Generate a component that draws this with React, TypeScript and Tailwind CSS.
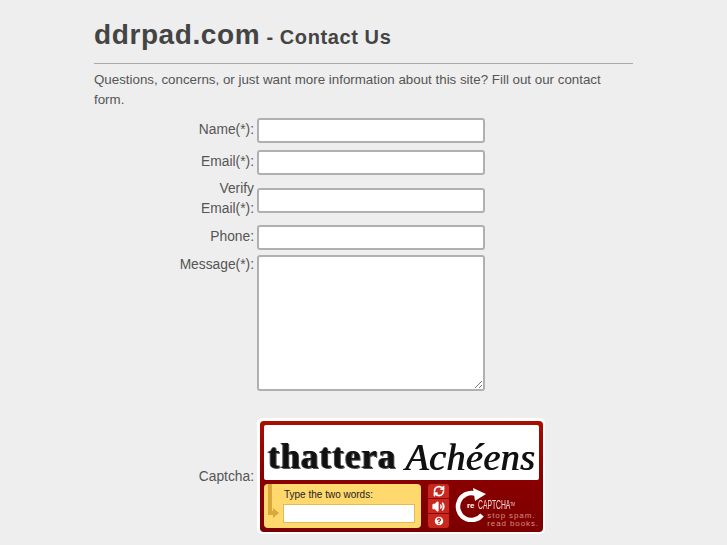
import { HelpCircle, RefreshCw, Volume2 } from "lucide-react";

const fieldClass = "block w-[228px] h-[25px] -ml-[1px] rounded-[3px] border-2 border-[#b0b0b0] bg-white";

function Row({ label, children, className }: { label: React.ReactNode; children: React.ReactNode; className?: string }) {
  return (
    <div className={`flex items-center ${className ?? ""}`}>
      <div className="w-[160px] pb-[2px] text-right">{label}</div>
      <div className="ml-[4px]">{children}</div>
    </div>
  );
}

function RecaptchaLogo() {
  return (
    <svg width="34" height="34" viewBox="0 0 34 34" className="shrink-0">
      <path d="M20 5.5 A13.5 13.5 0 1 0 27 27" fill="none" stroke="#ffffff" strokeWidth="4.5" />
      <path d="M18 0 L31 6 L20 13 Z" fill="#ffffff" />
    </svg>
  );
}

function Captcha() {
  return (
    <div className="w-[288px] h-[116px] rounded-[5px] bg-white p-[3px]">
      <div className="flex h-[111px] w-[283px] flex-col gap-[4px] rounded-[4px] bg-gradient-to-b from-[#a80f00] via-[#8a0000] to-[#7c0000] p-[4px]">
        <div className="flex h-[55px] w-[275px] items-center overflow-hidden rounded-[2px] bg-white pl-[4px] pt-[8px] text-[#111111] blur-[0.6px]">
          <span className="w-[137px] font-['Liberation_Serif',serif] text-[35px] leading-none font-bold tracking-[1px] [text-shadow:1px_1px_0_#555,-1px_0_0_#555]">thattera</span>
          <span className="font-['Liberation_Serif',serif] text-[38px] leading-none italic tracking-[0.5px] [text-shadow:1px_0_0_#111]">Achéens</span>
        </div>
        <div className="flex">
          <div className="relative h-[44px] w-[157px] rounded-[4px] bg-[#ffd96e]">
            <div className="absolute left-[4px] top-0 h-[31px] w-[4px] bg-[#d9a93b]" />
            <div className="absolute left-[4px] top-[27px] h-[4px] w-[8px] bg-[#d9a93b]" />
            <div className="absolute left-[9px] top-[24px] h-0 w-0 border-y-[5px] border-l-[6px] border-y-transparent border-l-[#d9a93b]" />
            <div className="pl-[20px] pt-[4px] font-['Liberation_Sans',sans-serif] text-[10px] leading-[13px] text-[#222222]">Type the two words:</div>
            <div className="ml-[19px] mt-[3px] h-[19px] w-[132px] border border-[#e3bb55] bg-white" />
          </div>
          <div className="ml-[7px] flex h-[44px] w-[21px] flex-col divide-y divide-[#8a0000] rounded-[3px] bg-[#c8281e] text-white">
            <div className="flex flex-1 items-center justify-center"><RefreshCw size={12} strokeWidth={3.5} /></div>
            <div className="flex flex-1 items-center justify-center"><Volume2 size={13} strokeWidth={2.5} fill="#ffffff" /></div>
            <div className="flex flex-1 items-center justify-center"><HelpCircle size={12} strokeWidth={3} fill="#ffffff" stroke="#c8281e" /></div>
          </div>
          <div className="relative ml-[6px] flex w-[84px] pt-[4px]">
            <RecaptchaLogo />
            <span className="absolute left-[12px] top-[17px] font-['Liberation_Sans',sans-serif] text-[8px] leading-[9px] font-bold text-white">re</span>
            <div className="absolute left-[23px] top-[15px] origin-left scale-x-[0.52] font-['Liberation_Sans',sans-serif] text-[13px] leading-[11px] whitespace-nowrap text-[#f6dcd8]">
              CAPTCHA<span className="align-top text-[6px]">TM</span>
            </div>
            <div className="absolute right-0 top-[28px] text-left font-['Liberation_Sans',sans-serif] text-[8px] leading-[8px] tracking-[0.9px] whitespace-nowrap text-[#d98c82]">
              stop spam.
              <br />
              read books.
            </div>
          </div>
        </div>
      </div>
    </div>
  );
}

export default function App() {
  return (
    <div className="min-h-[545px] overflow-hidden bg-[#eeeeee] font-['Liberation_Sans',Arial,sans-serif] text-[13.8px] leading-[20px] text-[#555555]">
      <div className="ml-[94px] h-[545px] w-[539px] overflow-hidden">
        <h1 className="mt-[18px] border-b border-[#aaaaaa] pb-[6px] leading-[34px] font-bold tracking-[0.6px] text-[#444444]">
          <span className="text-[28px]">ddrpad.com</span>
          <span className="text-[20px]"> - Contact Us</span>
        </h1>
        <p className="mt-[6px] text-[13.33px]">Questions, concerns, or just want more information about this site? Fill out our contact form.</p>

        <Row label="Name(*):" className="mt-[8px]">
          <div className={fieldClass} />
        </Row>
        <Row label="Email(*):" className="mt-[7px]">
          <div className={fieldClass} />
        </Row>
        <Row
          label={
            <>
              Verify
              <br />
              Email(*):
            </>
          }
          className="mt-[4px]"
        >
          <div className={fieldClass} />
        </Row>
        <Row label="Phone:" className="mt-[4px]">
          <div className={fieldClass} />
        </Row>
        <div className="mt-[5px] flex items-start">
          <div className="w-[160px] text-right">Message(*):</div>
          <div className="relative ml-[3px] h-[136px] w-[228px] rounded-[3px] border-2 border-[#b0b0b0] bg-white">
            <svg width="8" height="8" viewBox="0 0 8 8" className="absolute right-[1px] bottom-[1px]">
              <path d="M1 8 L8 1 M5 8 L8 5" stroke="#777777" strokeWidth="1" />
            </svg>
          </div>
        </div>
        <div className="mt-[27px] flex items-center">
          <div className="w-[160px] pt-[2px] text-right">Captcha:</div>
          <div className="ml-[3px]">
            <Captcha />
          </div>
        </div>
      </div>
    </div>
  );
}
